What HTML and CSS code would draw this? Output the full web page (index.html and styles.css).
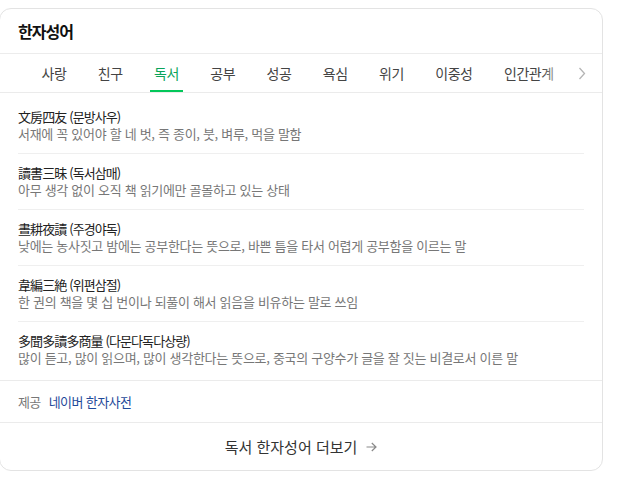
FILE: index.html
```html
<!DOCTYPE html>
<html lang="ko">
<head>
<meta charset="utf-8">
<title>한자성어</title>
<link rel="stylesheet" href="styles.css">
</head>
<body>
<section class="card">
  <header class="card-head">
    <h2 class="card-title">한자성어</h2>
  </header>
  <nav class="tabs">
    <div class="tab-list">
      <a class="tab">사랑</a>
      <a class="tab">친구</a>
      <a class="tab active">독서</a>
      <a class="tab">공부</a>
      <a class="tab">성공</a>
      <a class="tab">욕심</a>
      <a class="tab">위기</a>
      <a class="tab">이중성</a>
      <a class="tab">인간관계</a>
    </div>
    <div class="tab-fade">
      <svg class="chev" width="8" height="13" viewBox="0 0 8 13"><path d="M1.5 1 L6.5 6.5 L1.5 12" fill="none" stroke="#b5b5b5" stroke-width="1.3"/></svg>
    </div>
  </nav>
  <ul class="idiom-list">
    <li class="idiom">
      <p class="idiom-name">文房四友 (문방사우)</p>
      <p class="idiom-desc">서재에 꼭 있어야 할 네 벗, 즉 종이, 붓, 벼루, 먹을 말함</p>
    </li>
    <li class="idiom">
      <p class="idiom-name">讀書三昧 (독서삼매)</p>
      <p class="idiom-desc">아무 생각 없이 오직 책 읽기에만 골몰하고 있는 상태</p>
    </li>
    <li class="idiom">
      <p class="idiom-name">晝耕夜讀 (주경야독)</p>
      <p class="idiom-desc">낮에는 농사짓고 밤에는 공부한다는 뜻으로, 바쁜 틈을 타서 어렵게 공부함을 이르는 말</p>
    </li>
    <li class="idiom">
      <p class="idiom-name">韋編三絶 (위편삼절)</p>
      <p class="idiom-desc">한 권의 책을 몇 십 번이나 되풀이 해서 읽음을 비유하는 말로 쓰임</p>
    </li>
    <li class="idiom">
      <p class="idiom-name">多聞多讀多商量 (다문다독다상량)</p>
      <p class="idiom-desc">많이 듣고, 많이 읽으며, 많이 생각한다는 뜻으로, 중국의 구양수가 글을 잘 짓는 비결로서 이른 말</p>
    </li>
  </ul>
  <div class="source">
    <span class="source-label">제공</span>
    <a class="source-link">네이버 한자사전</a>
  </div>
  <a class="more">
    <span>독서 한자성어 더보기</span>
    <svg class="more-arrow" width="11" height="10" viewBox="0 0 11 10"><path d="M0.5 5 H10 M5.8 1 L10 5 L5.8 9" fill="none" stroke="#8a8a8a" stroke-width="1.2"/></svg>
  </a>
</section>
</body>
</html>
```
FILE: styles.css
```css
* {
  box-sizing: border-box;
  margin: 0;
  padding: 0;
}

body {
  margin: 0;
  background: #fff;
  font-family: "Noto Sans CJK KR", "Noto Sans", sans-serif;
  color: #222;
}

a {
  text-decoration: none;
  color: inherit;
}

ul {
  list-style: none;
}

.card {
  width: 604px;
  margin: 8px 0 0 -1px;
  border: 1px solid #e3e3e3;
  border-radius: 12px;
  background: #fff;
  overflow: hidden;
}

.card-head {
  height: 45px;
  display: flex;
  align-items: center;
  padding: 0 18px;
  border-bottom: 1px solid #ececec;
}

.card-title {
  font-size: 16px;
  font-weight: 700;
  color: #111;
  letter-spacing: -1px;
  line-height: 20px;
}

.tabs {
  position: relative;
  height: 39px;
  border-bottom: 1px solid #ebebeb;
}

.tab-list {
  display: flex;
  gap: 23.5px;
  padding-left: 37.5px;
  height: 38px;
  overflow: hidden;
}

.tab {
  position: relative;
  display: flex;
  align-items: center;
  height: 38px;
  padding: 0 4px;
  font-size: 14px;
  color: #444;
  white-space: nowrap;
  letter-spacing: -0.5px;
}

.tab.active {
  color: #0aa35a;
}

.tab.active::after {
  content: "";
  position: absolute;
  left: -0.5px;
  right: -0.5px;
  bottom: 0;
  height: 2px;
  background: #03c75a;
}

.tab-fade {
  position: absolute;
  top: 0;
  right: 0;
  width: 60px;
  height: 38px;
  display: flex;
  align-items: center;
  justify-content: flex-end;
  padding-right: 16px;
  background: linear-gradient(to right, rgba(255, 255, 255, 0), #fff 45%);
}

.idiom-list {
  padding: 5px 18px 3px;
}

.idiom {
  padding: 10px 0 11px;
  border-bottom: 1px solid #efefef;
}

.idiom:last-child {
  border-bottom: none;
}

.idiom-name,
.idiom-desc {
  font-size: 13px;
  line-height: 17px;
  white-space: nowrap;
}

.idiom-name {
  color: #222;
  letter-spacing: -0.9px;
}

.idiom-desc {
  color: #777;
  letter-spacing: -0.3px;
}

.source {
  display: flex;
  gap: 8px;
  padding: 12px 18px;
  border-top: 1px solid #ebebeb;
  font-size: 13px;
  line-height: 17px;
  letter-spacing: -0.6px;
}

.source-label {
  color: #777;
}

.source-link {
  color: #1f4a9a;
}

.more {
  display: flex;
  align-items: center;
  justify-content: center;
  gap: 9px;
  height: 48px;
  border-top: 1px solid #ebebeb;
  font-size: 15px;
  color: #333;
  letter-spacing: 0;
}

.more-arrow {
  margin-top: 1px;
}
```
